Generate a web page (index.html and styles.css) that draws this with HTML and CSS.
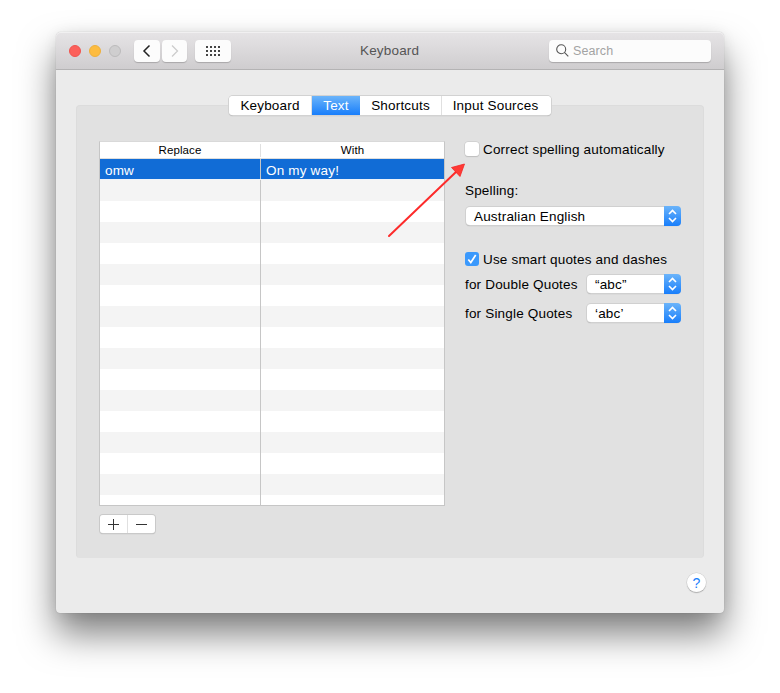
FILE: index.html
```html
<!DOCTYPE html>
<html lang="en">
<head>
<meta charset="utf-8">
<title>Keyboard</title>
<link rel="stylesheet" href="styles.css">
</head>
<body>
<main class="window">
  <header class="titlebar">
    <div class="lights"><i class="light close"></i><i class="light minimise"></i><i class="light disabled"></i></div>
    <div class="nav">
      <button class="tool back" aria-label="Back"><svg width="26" height="22" viewBox="0 0 26 22"><path d="M15.5 5.5 10 11l5.500 5.500" fill="none" stroke="#222" stroke-width="1.500"/></svg></button>
      <button class="tool forward" aria-label="Forward"><svg width="25" height="22" viewBox="0 0 25 22"><path d="M10 5.500l5.500 5.500-5.500 5.500" fill="none" stroke="#ccc" stroke-width="1.300"/></svg></button>
    </div>
    <button class="tool all" aria-label="Show all"><svg width="36" height="22" viewBox="0 0 36 22"><g stroke="#444" stroke-width="2" stroke-dasharray="2 2"><path d="M11 7h14M11 11h14M11 15h14"/></g></svg></button>
    <h1 class="title">Keyboard</h1>
    <div class="search"><svg width="13" height="13" viewBox="0 0 13 13"><g fill="none" stroke="#555" stroke-width="1.100"><circle cx="5.200" cy="5.200" r="4.500"/><path d="M8.400 8.400l3.900 3.900"/></g></svg><span>Search</span></div>
  </header>
  <nav class="tabs"><button>Keyboard</button><button class="active">Text</button><button>Shortcuts</button><button>Input Sources</button></nav>
  <section class="panel">
    <div class="left">
      <div class="table">
        <div class="head"><span>Replace</span><span>With</span></div>
        <div class="rows">
          <div class="row selected"><span>omw</span><span>On my way!</span></div>
          <div class="stripes"><i></i><i></i></div>
        </div>
      </div>
      <div class="addremove">
        <button aria-label="Add"><svg width="27" height="18" viewBox="0 0 27 18"><path d="M8 9.500h11M13.500 4v11" stroke="#333"/></svg></button><button aria-label="Remove"><svg width="27" height="18" viewBox="0 0 27 18"><path d="M8 9.500h11" stroke="#333"/></svg></button>
      </div>
    </div>
    <div class="options">
      <label class="check"><i class="box"></i><span>Correct spelling automatically</span></label>
      <div class="caption">Spelling:</div>
      <div class="select wide"><span>Australian English</span><b><svg width="17" height="20" viewBox="0 0 17 20"><path d="M5 8l3.500-3.500L12 8M5 12l3.500 3.500L12 12" fill="none" stroke="#fff" stroke-width="1.600"/></svg></b></div>
      <label class="check smart"><i class="box on"><svg width="14" height="14" viewBox="0 0 14 14"><path d="M3.300 7.500l2.500 3L10.700 3" fill="none" stroke="#fff" stroke-width="1.700"/></svg></i><span>Use smart quotes and dashes</span></label>
      <div class="pair"><span class="name">for Double Quotes</span><div class="select"><span>“abc”</span><b><svg width="17" height="20" viewBox="0 0 17 20"><path d="M5 8l3.500-3.500L12 8M5 12l3.500 3.500L12 12" fill="none" stroke="#fff" stroke-width="1.600"/></svg></b></div></div>
      <div class="pair"><span class="name">for Single Quotes</span><div class="select"><span>‘abc’</span><b><svg width="17" height="20" viewBox="0 0 17 20"><path d="M5 8l3.500-3.500L12 8M5 12l3.500 3.500L12 12" fill="none" stroke="#fff" stroke-width="1.600"/></svg></b></div></div>
    </div>
  </section>
  <footer class="footer"><button class="help">?</button></footer>
  <svg class="arrow" width="80" height="76" viewBox="0 0 80 76"><path d="M2 74 70 9" stroke="#fd2b2b" stroke-width="2" stroke-linecap="round"/><path d="M77.500 2 73 14.500 64.500 5.500z" fill="#ff3a35" stroke="#f42323" stroke-width=".8"/></svg>
</main>
</body>
</html>
```
FILE: styles.css
```css
* { box-sizing: border-box; }
body {
  margin: 0;
  height: 693px;
  padding: 32px 56px;
  overflow: hidden;
  background: #fff;
  font: 13.5px/20px "Liberation Sans", Arial, sans-serif;
  letter-spacing: .18px;
  color: #000;
}
button {
  margin: 0;
  padding: 0;
  border: 0;
  background: #fff;
  font: inherit;
  letter-spacing: inherit;
  color: inherit;
}
svg { display: block; }
.window {
  position: relative;
  display: flex;
  flex-direction: column;
  width: 668px;
  height: 581px;
  border-radius: 5px 5px 4px 4px;
  background: #ebebeb;
  box-shadow: 0 0 1px rgba(0,0,0,.3), 0 21px 36px rgba(0,0,0,.5), 0 2px 14px rgba(0,0,0,.08);
}
.titlebar {
  display: flex;
  align-items: center;
  height: 38px;
  padding: 0 13px;
  border-radius: 5px 5px 0 0;
  border-bottom: 1px solid #b4b3b4;
  background: linear-gradient(#e6e4e6, #cfcdcf);
  box-shadow: inset 0 1px #f1f0f1;
}
.lights { display: flex; gap: 8px; margin-right: 13px; }
.light { width: 12px; height: 12px; border-radius: 50%; border: 1px solid; }
.close { background: #fc605b; border-color: #f0544f; }
.minimise { background: #fdbc40; border-color: #eeb03c; }
.disabled { background: #cfcecf; border-color: #bcbbbc; }
.nav { display: flex; gap: 2px; margin-right: 8px; }
.tool { height: 22px; border-radius: 4px; background: #fcfcfc; box-shadow: 0 1px 1px rgba(0,0,0,.2); }
.title { width: 62px; margin: 0 0 0 129px; padding-top: 1px; font-size: 13.5px; font-weight: 400; color: #555; }
.search {
  display: flex;
  align-items: center;
  gap: 4px;
  width: 162px;
  height: 22px;
  margin-left: auto;
  padding-left: 7px;
  border-radius: 4px;
  background: #fcfcfc;
  box-shadow: 0 1px 1px rgba(0,0,0,.2);
  color: #a3a3a3;
}
.search span { padding-top: 1px; font-size: 12.5px; letter-spacing: .1px; }
.tabs {
  z-index: 1;
  display: flex;
  align-self: center;
  width: 322px;
  height: 19px;
  margin-top: 26px;
  border-radius: 4px;
  overflow: hidden;
  background: #fff;
  box-shadow: 0 0 0 1px #d2d2d2, 0 1px 1px #999;
}
.tabs button { width: 83px; line-height: 19px; border-right: 1px solid #e0e0e0; }
.tabs button:nth-child(2) { width: 48px; }
.tabs button:nth-child(3) { width: 82px; }
.tabs button:nth-child(4) { flex: 1; border: 0; padding-right: 2px; }
.tabs .active { border: 0; background: linear-gradient(#6bb4fa, #187efb); color: #fff; }
.panel {
  display: flex;
  align-items: flex-start;
  gap: 20px;
  height: 453px;
  margin: -10px 20px 0;
  padding: 36px 23px 0;
  border: 1px solid #dcdcdc;
  border-width: 1px 1px 0;
  border-radius: 4px;
  background: #e1e1e1;
}
.left { flex: none; width: 346px; margin: -1px 0 0 -1px; }
.table {
  display: flex;
  flex-direction: column;
  height: 365px;
  border: 1px solid #c6c6c6;
  border-top-color: #d9d9d9;
  background: #fff;
}
.head, .row { display: grid; grid-template-columns: 161px 1fr; }
.head { height: 17px; padding: 2px 0; border-bottom: 1px solid #dedede; font-size: 11.5px; line-height: 13px; letter-spacing: .1px; text-align: center; }
.head span:first-child { border-right: 1px solid #e0e0e0; }
.rows { display: flex; flex-direction: column; flex: 1; }
.row { height: 20px; }
.row span { padding-left: 5px; line-height: 24px; }
.row span:first-child { border-right: 1px solid #c6c6c6; }
.selected { background: #116cd6; color: #fff; }
.stripes {
  display: grid;
  grid-template-columns: 161px 1fr;
  flex: 1;
  background: repeating-linear-gradient(#f4f4f4 0 21px, #fff 21px 42px);
  border-top: 1px solid #eef3fa;
}
.stripes i:first-child { border-right: 1px solid #c6c6c6; }
.addremove {
  display: flex;
  width: 55px;
  height: 18px;
  margin: 9px 0 0 1px;
  gap: 1px;
  border-radius: 3px;
  overflow: hidden;
  background: #e0e0e0;
  box-shadow: 0 0 0 1px #c9c9c9, 0 1px 1px #999;
}
.options { flex: none; width: 217px; }
.check { display: flex; align-items: center; height: 14px; gap: 4px; line-height: 16px; white-space: nowrap; }
.check span, .name { padding-top: 2px; }
.box { width: 14px; height: 14px; border-radius: 3px; background: #fff; box-shadow: 0 0 0 .5px #c4c4c4, 0 1px 1px #bbb; }
.box.on { background: #3b99fc; box-shadow: none; }
.caption { margin: 25px 0 6px; line-height: 20px; }
.select {
  display: flex;
  justify-content: space-between;
  width: 93px;
  height: 18px;
  border-radius: 4px;
  background: #fff;
  box-shadow: 0 0 0 1px #d0d0d0, 0 1px 1px #999;
}
.select span { padding-left: 8px; line-height: 19px; }
.select b { width: 17px; height: 20px; margin: -1px -1px 0 0; border-radius: 0 4px 4px 0; background: linear-gradient(#6bb4fa, #187efb); }
.wide { width: 214px; margin-left: 1px; }
.smart { margin: 27px 0 9px; }
.pair { display: flex; align-items: center; justify-content: space-between; width: 215px; height: 18px; margin-bottom: 11px; }
.footer { display: flex; justify-content: flex-end; padding: 15px 18px 0; }
.help { width: 19px; height: 19px; border-radius: 50%; box-shadow: 0 0 0 .5px #ccc, 0 1px 1px #999; font-size: 14px; line-height: 20px; letter-spacing: 0; color: #187efb; }
/* callout arrow laid over the pane */
.arrow { position: absolute; left: 331px; top: 130px; z-index: 2; }
```
